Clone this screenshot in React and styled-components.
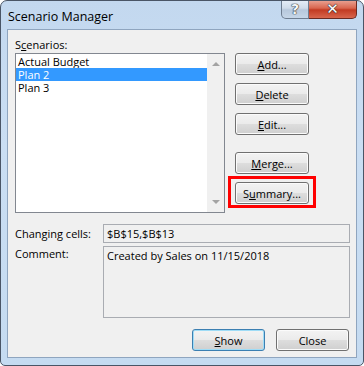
import React from "react";
import styled, { createGlobalStyle } from "styled-components";

const Global = createGlobalStyle`
  html, body {
    margin: 0;
    padding: 0;
    background: #ffffff;
  }
  body {
    font-family: "Open Sans", "Noto Sans", sans-serif;
    font-size: 11px;
    color: #000;
  }
`;

const Window = styled.div`
  box-sizing: border-box;
  width: 364px;
  height: 366px;
  border: 1px solid #4a5566;
  border-radius: 7px 7px 5px 5px;
  background: linear-gradient(180deg, #c3d8ef 0%, #cadef3 40%, #c5dbf1 100%);
  padding: 0 6px 7px 6px;
  display: flex;
  flex-direction: column;
  overflow: hidden;
`;

const TitleBar = styled.div`
  height: 28px;
  display: flex;
  align-items: flex-start;
  justify-content: space-between;
`;

const Title = styled.div`
  padding: 7px 0 0 1px;
  font-size: 12.5px;
  color: #000;
`;

const Controls = styled.div`
  display: flex;
  margin-top: -1px;
`;

const CapButton = styled.div`
  box-sizing: border-box;
  height: 19px;
  width: ${p => (p.$close ? "48px" : "28px")};
  border: 1px solid ${p => (p.$close ? "#6b2a22" : "#6e7d90")};
  border-top: none;
  border-radius: ${p => (p.$close ? "0 0 5px 0" : "0 0 0 5px")};
  border-left: ${p => (p.$close ? "none" : undefined)};
  background: ${p =>
    p.$close
      ? "linear-gradient(180deg, #eaa697 0%, #d9664f 45%, #c23a22 55%, #d8664d 100%)"
      : "linear-gradient(180deg, #e6eef8 0%, #d0dcea 45%, #b7c8dc 55%, #c6d6e8 100%)"};
  display: flex;
  align-items: center;
  justify-content: center;
  color: ${p => (p.$close ? "#ffffff" : "#f4f6f9")};
  font-family: "DejaVu Sans", sans-serif;
  font-weight: bold;
  font-size: ${p => (p.$close ? "15px" : "14px")};
  line-height: 1;
  text-shadow: 0 0 1px #2c2c2c, 0 0 1px #2c2c2c, 0 0 1px #2c2c2c;
`;

const Client = styled.div`
  flex: 1;
  background: #f0f0f0;
  border: 1px solid #8fa5bf;
  padding: 8px 6px 0 7px;
  display: flex;
  flex-direction: column;
`;

const Key = styled.span`
  text-decoration: underline;
  text-underline-offset: 1px;
`;

const Top = styled.div`
  display: grid;
  grid-template-columns: 210px 74px;
  column-gap: 10px;
`;

const Label = styled.div`
  height: 15px;
  line-height: 13px;
  grid-column: 1 / -1;
`;

const ListBox = styled.div`
  box-sizing: border-box;
  height: 160px;
  border: 1px solid #828790;
  background: #fff;
  display: flex;
`;

const Items = styled.div`
  flex: 1;
  padding-top: 1px;
`;

const Item = styled.div`
  height: 13px;
  line-height: 13px;
  padding-left: 2px;
  overflow: hidden;
  background: ${p => (p.$selected ? "#3399ff" : "transparent")};
  color: ${p => (p.$selected ? "#fff" : "#000")};
`;

const ScrollBar = styled.div`
  width: 17px;
  background: #f0f0f0;
  display: flex;
  flex-direction: column;
  justify-content: space-between;
  align-items: center;
  padding: 8px 0 8px;
`;

const Arrow = styled.div`
  width: 0;
  height: 0;
  border-left: 4px solid transparent;
  border-right: 4px solid transparent;
  ${p =>
    p.$down
      ? "border-top: 4px solid #a3a3a3;"
      : "border-bottom: 4px solid #a3a3a3;"}
`;

const ButtonCol = styled.div`
  display: flex;
  flex-direction: column;
  position: relative;
`;

const Button = styled.div`
  box-sizing: border-box;
  width: ${p => p.$w || "74px"};
  height: 22px;
  margin-bottom: ${p => p.$gap || "8px"};
  border: 1px solid ${p => (p.$default ? "#3c7fb1" : "#707070")};
  border-radius: 3px;
  background: linear-gradient(180deg, #f3f3f3 0%, #ebebeb 48%, #dddddd 52%, #cfcfcf 100%);
  box-shadow: inset 0 0 0 1px ${p => (p.$default ? "#9fdcf6" : "#fbfbfb")};
  display: flex;
  align-items: center;
  justify-content: center;
`;

const Highlight = styled.div`
  position: absolute;
  left: -7px;
  top: 123px;
  width: 88px;
  height: 32px;
  box-sizing: border-box;
  border: 3px solid #ff0000;
`;

const Fields = styled.div`
  margin-top: 11px;
  display: grid;
  grid-template-columns: 88px 247px;
  row-gap: 3px;
`;

const FieldLabel = styled.div`
  line-height: ${p => (p.$top ? "13px" : "19px")};
  padding-top: ${p => (p.$top ? "1px" : "0")};
`;

const Field = styled.div`
  box-sizing: border-box;
  height: ${p => p.$h};
  border: 1px solid #a9acb2;
  background: #f0f0f0;
  padding: 2px 3px;
  line-height: 14px;
`;

const Footer = styled.div`
  margin-top: 11px;
  display: flex;
  justify-content: flex-end;
  gap: 11px;
  padding-right: 1px;
`;

export default function App() {
  return (
    <>
      <Global />
      <Window>
        <TitleBar>
          <Title>Scenario Manager</Title>
          <Controls>
            <CapButton>?</CapButton>
            <CapButton $close>✕</CapButton>
          </Controls>
        </TitleBar>
        <Client>
          <Top>
            <Label>
              S<Key>c</Key>enarios:
            </Label>
            <ListBox>
              <Items>
                <Item>Actual Budget</Item>
                <Item $selected>Plan 2</Item>
                <Item>Plan 3</Item>
              </Items>
              <ScrollBar>
                <Arrow />
                <Arrow $down />
              </ScrollBar>
            </ListBox>
            <ButtonCol>
              <Button>
                <Key>A</Key>dd...
              </Button>
              <Button>
                <Key>D</Key>elete
              </Button>
              <Button $gap="17px">
                <Key>E</Key>dit...
              </Button>
              <Button>
                <Key>M</Key>erge...
              </Button>
              <Button>
                S<Key>u</Key>mmary...
              </Button>
              <Highlight />
            </ButtonCol>
          </Top>
          <Fields>
            <FieldLabel>Changing cells:</FieldLabel>
            <Field $h="19px">$B$15,$B$13</Field>
            <FieldLabel $top>Comment:</FieldLabel>
            <Field $h="72px">Created by Sales on 11/15/2018</Field>
          </Fields>
          <Footer>
            <Button $default $w="73px" $gap="0">
              <Key>S</Key>how
            </Button>
            <Button $w="73px" $gap="0">
              Close
            </Button>
          </Footer>
        </Client>
      </Window>
    </>
  );
}
